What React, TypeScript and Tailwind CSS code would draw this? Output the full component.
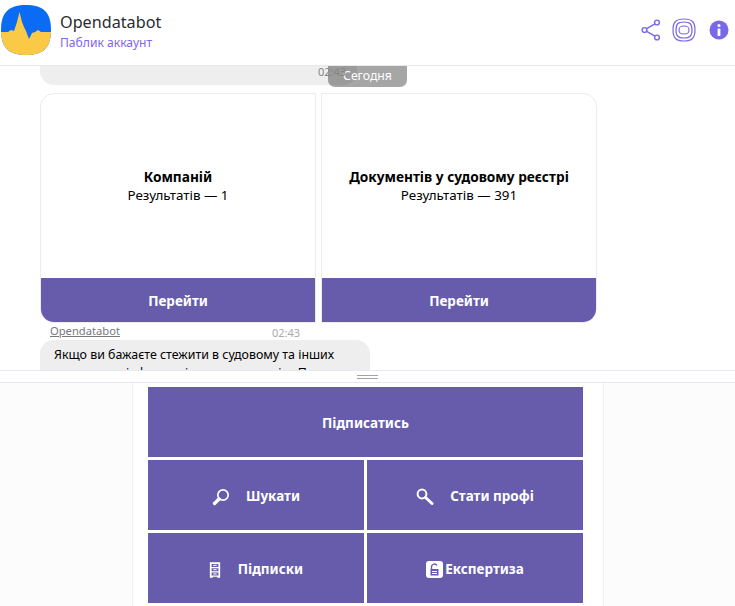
export default function App() {
  const font = { fontFamily: '"Noto Sans", "Open Sans", sans-serif' };
  return (
    <div className="w-[735px] h-[606px] overflow-hidden bg-white flex flex-col font-['Noto_Sans',sans-serif]" style={font}>
      <header className="h-[66px] shrink-0 flex items-center border-b border-[#e9e9ee] pl-[1px] pr-[6px] pb-[6px]">
        <svg width="50" height="50" viewBox="0 0 50 50" className="shrink-0">
          <defs>
            <clipPath id="sq"><path d="M25 0C41 0 50 6 50 25S41 50 25 50 0 44 0 25 9 0 25 0Z" /></clipPath>
          </defs>
          <g clipPath="url(#sq)">
            <rect width="50" height="50" fill="#0a6cf5" />
            <path d="M0 27L7 27 10 25 13 26 16 17 18.5 7 21 17 23 22 25 26 28 34 31 28 34 27 37 25 40 27 50 27 50 50 0 50Z" fill="#fac946" />
          </g>
        </svg>
        <div className="ml-[9px] pt-[2px] flex flex-col">
          <span className="text-[16.2px] leading-[24px] text-[#2b2b30]">Opendatabot</span>
          <span className="text-[12.1px] leading-[18px] text-[#7f66f0]">Паблик аккаунт</span>
        </div>
        <div className="ml-auto flex items-center">
          <svg width="20" height="22" viewBox="0 0 20 22" fill="none" stroke="#7a68ea" strokeWidth="1.4" className="mr-[11px]">
            <circle cx="3.5" cy="11" r="2.4" /><circle cx="16" cy="3.5" r="2.4" /><circle cx="16" cy="18.5" r="2.4" />
            <path d="M5.7 9.7L13.9 4.8M5.7 12.3L13.9 17.2" />
          </svg>
          <svg width="24" height="24" viewBox="0 0 24 24" fill="none" stroke="#7a68ea" strokeWidth="1.2" className="mr-[13px]">
            <path d="M12 1C20 1 23 4 23 12S20 23 12 23 1 20 1 12 4 1 12 1Z" />
            <path d="M12 4C18 4 20 6 20 12S18 20 12 20 4 18 4 12 6 4 12 4Z" />
            <path d="M12 8C16 8 17 9 17 12S16 16 12 16 7 15 7 12 8 8 12 8Z" />
          </svg>
          <svg width="20" height="20" viewBox="0 0 20 20">
            <circle cx="10" cy="10" r="9.5" fill="#7a68ea" />
            <circle cx="10" cy="5.5" r="1.5" fill="#fff" />
            <rect x="8.6" y="8.5" width="2.8" height="7.5" rx="0.6" fill="#fff" />
          </svg>
        </div>
      </header>

      <main className="relative h-[304px] shrink-0 overflow-hidden pl-[40px]">
        <div className="h-[19px] w-[317px] rounded-b-[14px] bg-[#eeeeee]" />
        <div className="absolute left-[328px] top-0 h-[21px] w-[79px] rounded-b-[7px] bg-black/35 text-center text-[12.2px] leading-[20px] text-white">Сегодня</div>
        <span className="absolute left-[318px] top-0 text-[11px] leading-[12px] text-[#858585]">02:43</span>

        <div className="mt-[8px] flex gap-[5px] w-[557px]">
          <Card title="Компаній" result="Результатів — 1" rounded="rounded-[14px] rounded-tr-none rounded-br-none" bottom="rounded-bl-[13px]" />
          <Card title="Документів у судовому реєстрі" result="Результатів — 391" rounded="rounded-[14px] rounded-tl-none rounded-bl-none" bottom="rounded-br-[13px]" />
        </div>

        <div className="relative h-[17px] w-[330px]">
          <span className="absolute left-[10px] top-0 text-[11.2px] leading-[16px] text-[#77777c] underline">Opendatabot</span>
          <span className="absolute left-[232px] top-[3px] text-[11px] leading-[14px] text-[#a9a9a9]">02:43</span>
        </div>
        <div className="w-[330px] rounded-[14px] bg-[#eeeeee] px-[14px] pt-[6px] text-[12.4px] leading-[18px] text-black h-[60px]">
          Якщо ви бажаєте стежити в судовому та інших<br />реєстрах за інформацією про компанію. Пере
        </div>
      </main>

      <div className="h-[13px] shrink-0 border-y border-[#e8e8f2] flex flex-col items-center justify-center gap-[2px] bg-white">
        <div className="h-px w-[21px] bg-[#a3a3a3]" />
        <div className="h-px w-[21px] bg-[#a3a3a3]" />
      </div>

      <section className="flex-1 flex justify-center bg-[#fcfcfd] pl-[1px]">
        <div className="w-[472px] h-full border-x border-[#f0f0f5] bg-white pt-[4px] pl-[15px]">
          <div className="grid w-[435px] grid-cols-2 grid-rows-[70px_70px_70px] gap-[3px] text-[13.5px] font-bold text-white">
            <button className="col-span-2 flex items-center justify-center pt-[3px] bg-[#665cab]">Підписатись</button>
            <button className="flex items-center justify-center gap-[16px] pt-[3px] bg-[#665cab]">
              <svg width="18" height="18" viewBox="0 0 18 18" fill="none" stroke="#fff">
                <circle cx="11" cy="7" r="5.2" strokeWidth="1.7" />
                <path d="M7 11L2.5 15.5" strokeWidth="3.4" strokeLinecap="round" />
              </svg>
              Шукати
            </button>
            <button className="flex items-center justify-center gap-[16px] pt-[3px] bg-[#665cab]">
              <svg width="18" height="18" viewBox="0 0 18 18" fill="none" stroke="#fff">
                <circle cx="6" cy="6" r="4.4" strokeWidth="2" />
                <path d="M9.5 9.5L16 15.5" strokeWidth="3" strokeLinecap="round" />
              </svg>
              Стати профі
            </button>
            <button className="flex items-center justify-center gap-[17px] pt-[3px] bg-[#665cab]">
              <svg width="12" height="18" viewBox="0 0 14 18">
                <path fillRule="evenodd" d="M1 0H13V18H9.5V17H4.5V18H1ZM3 2V5.5H11V2ZM3 7V10.5H11V7ZM3 12V15.5H11V12Z" fill="#fff" />
                <rect x="5" y="3" width="4" height="1.2" fill="#fff" /><rect x="5" y="8" width="4" height="1.2" fill="#fff" /><rect x="5" y="13" width="4" height="1.2" fill="#fff" />
              </svg>
              Підписки
            </button>
            <button className="flex items-center justify-center gap-[2px] pt-[3px] bg-[#665cab]">
              <svg width="17" height="17" viewBox="0 0 17 17">
                <rect width="17" height="17" rx="3" fill="#fff" />
                <rect x="4.5" y="8" width="8" height="6.5" fill="#665cab" />
                <path d="M5.5 8V5.5A3 3 0 0 1 11 4.5" fill="none" stroke="#665cab" strokeWidth="1.4" />
                <rect x="6" y="10" width="5" height="1" fill="#fff" /><rect x="6" y="12" width="5" height="1" fill="#fff" />
              </svg>
              Експертиза
            </button>
          </div>
        </div>
      </section>
    </div>
  );
}

function Card({ title, result, rounded, bottom }: { title: string; result: string; rounded: string; bottom: string }) {
  return (
    <div className={`w-[276px] h-[230px] flex flex-col border border-[#ececec] ${rounded}`}>
      <div className="flex-1 flex flex-col items-center justify-center text-black">
        <div className="text-[13.7px] leading-[18px] font-bold">{title}</div>
        <div className="text-[13.4px] leading-[19px]">{result}</div>
      </div>
      <div className={`h-[44px] flex items-center justify-center pt-[2px] bg-[#665cab] text-[13.5px] font-bold text-white ${bottom}`}>Перейти</div>
    </div>
  );
}
